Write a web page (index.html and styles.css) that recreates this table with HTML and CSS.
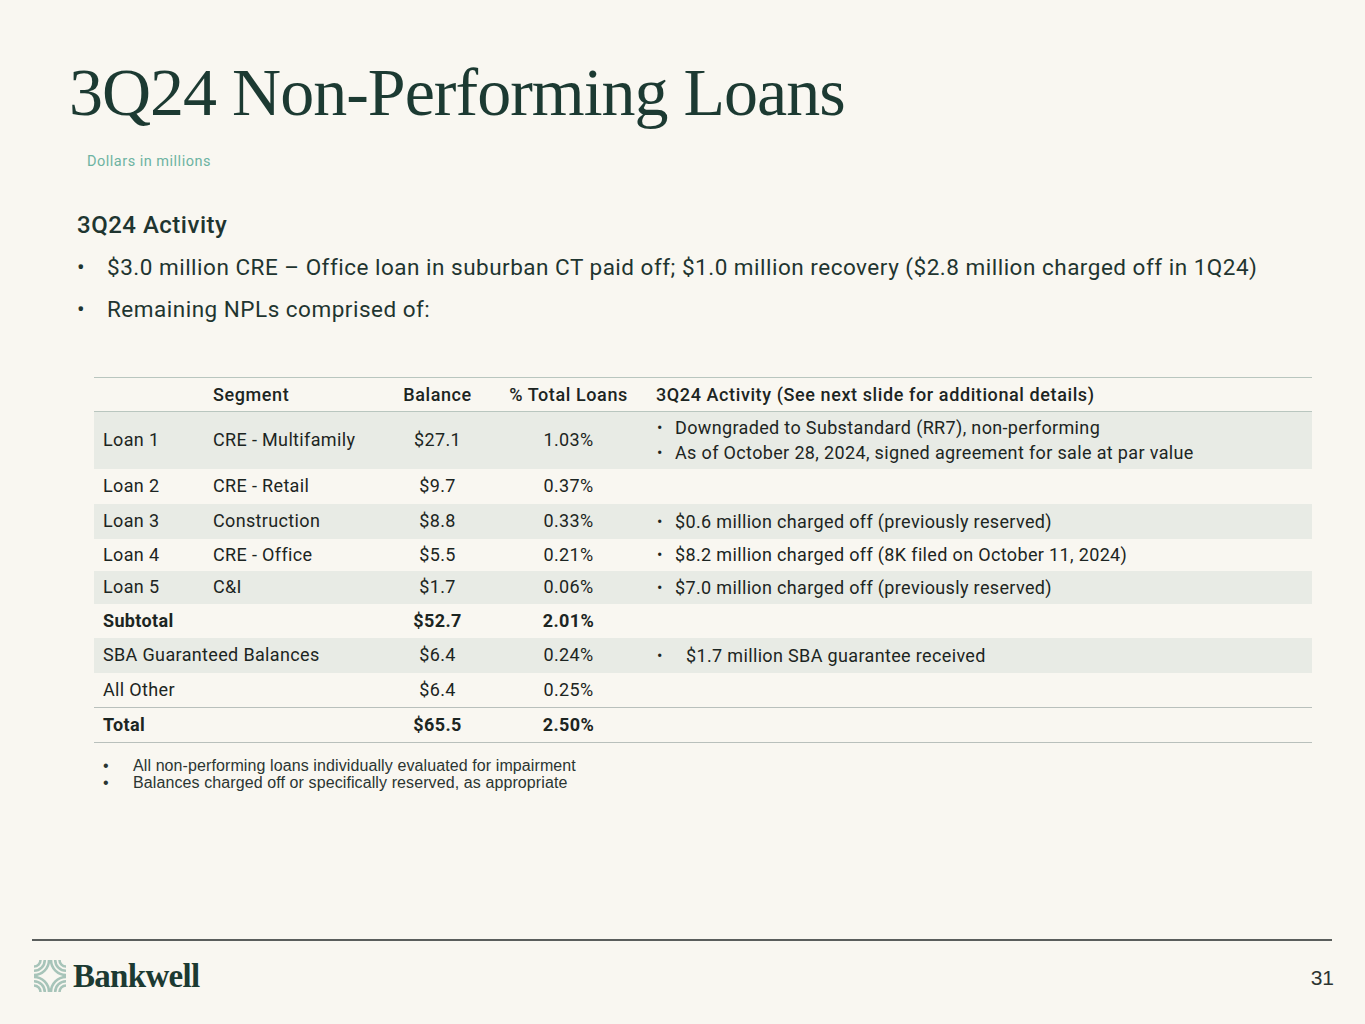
FILE: index.html
```html
<!DOCTYPE html>
<html>
<head>
<meta charset="utf-8">
<link rel="stylesheet" href="styles.css">
</head>
<body>
<div class="slide">
  <header class="head">
    <h1 class="title">3Q24 Non-Performing Loans</h1>
    <div class="unit">Dollars in millions</div>
  </header>

  <section class="activity">
    <h2 class="act-title">3Q24 Activity</h2>
    <ul class="act-list">
      <li>$3.0 million CRE – Office loan in suburban CT paid off; $1.0 million recovery ($2.8 million charged off in 1Q24)</li>
      <li>Remaining NPLs comprised of:</li>
    </ul>
  </section>

  <table class="npl">
    <colgroup>
      <col class="c1"><col class="c2"><col class="c3"><col class="c4"><col class="c5">
    </colgroup>
    <thead>
      <tr class="hdr">
        <th></th>
        <th class="left">Segment</th>
        <th>Balance</th>
        <th>% Total Loans</th>
        <th class="left act">3Q24 Activity (See next slide for additional details)</th>
      </tr>
    </thead>
    <tbody>
      <tr class="shade tall">
        <td>Loan 1</td><td>CRE - Multifamily</td><td class="num">$27.1</td><td class="num">1.03%</td>
        <td class="act"><ul class="bl"><li>Downgraded to Substandard (RR7), non-performing</li><li>As of October 28, 2024, signed agreement for sale at par value</li></ul></td>
      </tr>
      <tr class="r35">
        <td>Loan 2</td><td>CRE - Retail</td><td class="num">$9.7</td><td class="num">0.37%</td><td class="act"></td>
      </tr>
      <tr class="shade r35">
        <td>Loan 3</td><td>Construction</td><td class="num">$8.8</td><td class="num">0.33%</td>
        <td class="act"><ul class="bl"><li>$0.6 million charged off (previously reserved)</li></ul></td>
      </tr>
      <tr class="r32">
        <td>Loan 4</td><td>CRE - Office</td><td class="num">$5.5</td><td class="num">0.21%</td>
        <td class="act"><ul class="bl"><li>$8.2 million charged off (8K filed on October 11, 2024)</li></ul></td>
      </tr>
      <tr class="shade r33">
        <td>Loan 5</td><td>C&amp;I</td><td class="num">$1.7</td><td class="num">0.06%</td>
        <td class="act"><ul class="bl"><li>$7.0 million charged off (previously reserved)</li></ul></td>
      </tr>
      <tr class="bold r34">
        <td colspan="2">Subtotal</td><td class="num">$52.7</td><td class="num">2.01%</td><td class="act"></td>
      </tr>
      <tr class="shade r35">
        <td colspan="2">SBA Guaranteed Balances</td><td class="num">$6.4</td><td class="num">0.24%</td>
        <td class="act"><ul class="bl wide"><li>$1.7 million SBA guarantee received</li></ul></td>
      </tr>
      <tr class="r35">
        <td colspan="2">All Other</td><td class="num">$6.4</td><td class="num">0.25%</td><td class="act"></td>
      </tr>
      <tr class="bold total r35">
        <td colspan="2">Total</td><td class="num">$65.5</td><td class="num">2.50%</td><td class="act"></td>
      </tr>
    </tbody>
  </table>

  <ul class="notes">
    <li>All non-performing loans individually evaluated for impairment</li>
    <li>Balances charged off or specifically reserved, as appropriate</li>
  </ul>

  <footer class="foot">
    <div class="logo">
      <svg class="mark" width="32" height="32" viewBox="0 0 32 32">
        <g fill="none" stroke="#a7c4b9" stroke-width="2.6">
          <path d="M0 6.5 A6.5 6.5 0 0 0 6.5 0 M0 10.8 A10.8 10.8 0 0 0 10.8 0 M0 15 A15 15 0 0 0 15 0"/>
          <path d="M32 6.5 A6.5 6.5 0 0 1 25.5 0 M32 10.8 A10.8 10.8 0 0 1 21.2 0 M32 15 A15 15 0 0 1 17 0"/>
          <path d="M0 25.5 A6.5 6.5 0 0 1 6.5 32 M0 21.2 A10.8 10.8 0 0 1 10.8 32 M0 17 A15 15 0 0 1 15 32"/>
          <path d="M32 25.5 A6.5 6.5 0 0 0 25.5 32 M32 21.2 A10.8 10.8 0 0 0 21.2 32 M32 17 A15 15 0 0 0 17 32"/>
        </g>
      </svg>
      <span class="brand">Bankwell</span>
    </div>
    <div class="page">31</div>
  </footer>
</div>
</body>
</html>
```

FILE: styles.css
```css
* { box-sizing: border-box; }
html, body { margin: 0; padding: 0; }
body {
  background: #f9f7f1;
  font-family: Roboto, "Liberation Sans", sans-serif;
  color: #1f2f2b;
}
.slide {
  width: 1365px;
  height: 1024px;
  position: relative;
  display: flex;
  flex-direction: column;
}
.head { padding: 52px 0 0 69px; }
.title {
  margin: 0;
  font-family: "Liberation Serif", serif;
  font-weight: 400;
  font-size: 68px;
  letter-spacing: -1.0px;
  line-height: 80px;
  color: #1c3a32;
}
.unit {
  margin: 21px 0 0 18px;
  font-size: 14.5px;
  letter-spacing: 0.5px;
  color: #6db3a2;
  line-height: 18px;
}
.activity { padding: 0 0 0 77px; margin-top: 39px; }
.act-title {
  margin: 0;
  font-size: 24px;
  font-weight: 500;
  letter-spacing: 0.5px;
  line-height: 30px;
  color: #1f3530;
}
.act-list {
  list-style: none;
  margin: 13px 0 0 0;
  padding: 0;
}
.act-list li {
  position: relative;
  padding-left: 30px;
  font-size: 22.5px;
  letter-spacing: 0.5px;
  line-height: 28px;
  margin-bottom: 14px;
  color: #1f3530;
}
.act-list li::before {
  content: "•";
  position: absolute;
  left: 0;
  top: 0;
  letter-spacing: 0;
}
.npl {
  margin: 40px 0 0 94px;
  width: 1218px;
  border-collapse: collapse;
  table-layout: fixed;
  font-size: 18px;
  letter-spacing: 0.35px;
  color: #1c2522;
  border-top: 1.5px solid #b9c6bf;
}
.c1 { width: 111px; }
.c2 { width: 175px; }
.c3 { width: 115px; }
.c4 { width: 147px; }
.c5 { width: 670px; }
.npl th {
  font-weight: 500;
  height: 34px;
  text-align: center;
  padding: 0;
  letter-spacing: 0.6px;
  border-bottom: 1.5px solid #b9c6bf;
}
.npl th.left { text-align: left; padding-left: 8px; }
.npl th.act { padding-left: 14px; }
.npl td {
  padding: 0 0 0 9px;
  vertical-align: middle;
  line-height: 22px;
}
.npl td:nth-child(2) { padding-left: 8px; }
.npl td.num { text-align: center; padding: 0; }
.npl td.act { padding-left: 14px; }
.npl tr.shade td { background: #e8ebe5; }
.npl tr.tall { height: 57px; }
.npl tr.r35 { height: 35px; }
.npl tr.r34 { height: 34px; }
.npl tr.r33 { height: 33px; }
.npl tr.r32 { height: 32px; }
.npl tr.bold td { font-weight: 700; }
.npl tr.total td { border-top: 1.5px solid #b9c0bc; border-bottom: 1.5px solid #b9c0bc; }
.bl { list-style: none; margin: 0; padding: 0; }
.bl li { position: relative; padding-left: 19px; line-height: 25px; }
.bl li::before { content: "•"; position: absolute; left: 1px; top: 0; font-size: 16px; }
.bl.wide li { padding-left: 30px; }
.notes {
  list-style: none;
  margin: 14px 0 0 103px;
  padding: 0;
  font-family: "Liberation Sans", sans-serif;
  font-size: 16px;
  letter-spacing: 0.1px;
  line-height: 17px;
  color: #2a3532;
}
.notes li { position: relative; padding-left: 30px; }
.notes li::before { content: "•"; position: absolute; left: 0; }
.foot {
  margin-top: auto;
  margin-left: 32px;
  margin-right: 33px;
  border-top: 2px solid #5a5e5c;
  height: 85px;
  display: flex;
  justify-content: space-between;
  align-items: flex-start;
}
.logo {
  display: flex;
  align-items: center;
  gap: 7px;
  margin-top: 17px;
  margin-left: 2px;
}
.brand {
  font-family: "Liberation Serif", serif;
  font-weight: 700;
  font-size: 33px;
  letter-spacing: -0.7px;
  color: #1c3a32;
  line-height: 36px;
}
.page {
  margin-top: 25px;
  margin-right: -2px;
  font-family: "Liberation Sans", sans-serif;
  font-size: 21px;
  color: #2c3431;
}
```
